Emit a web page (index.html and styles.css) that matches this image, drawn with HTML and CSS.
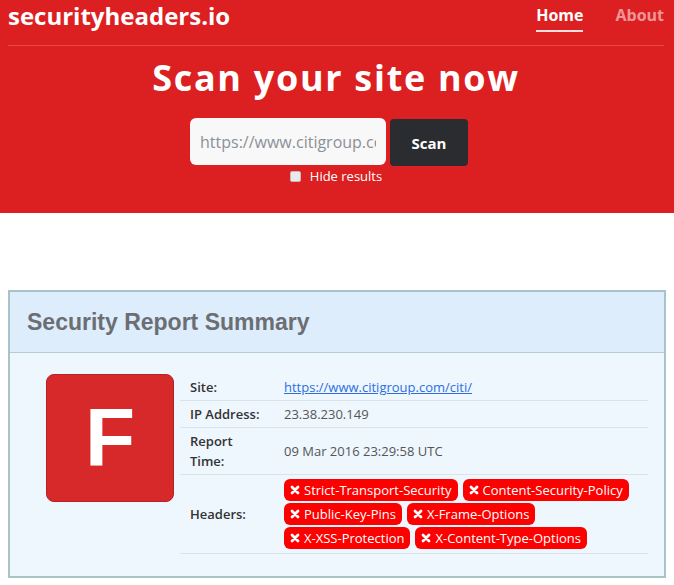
FILE: index.html
```html
<!DOCTYPE html>
<html>
<head>
<meta charset="utf-8">
<link rel="stylesheet" href="styles.css">
</head>
<body>
<header class="top">
  <div class="navbar">
    <div class="logo">securityheaders.io</div>
    <nav class="nav">
      <a class="nav-link active">Home</a>
      <a class="nav-link">About</a>
    </nav>
  </div>
  <div class="rule"></div>
  <h1 class="hero">Scan your site now</h1>
  <form class="scan">
    <input class="url" type="text" placeholder="https://www.citigroup.com/citi/">
    <button class="btn" type="button">Scan</button>
  </form>
  <label class="hide"><span class="box"></span>Hide results</label>
</header>

<main class="page">
  <section class="panel">
    <div class="panel-head">Security Report Summary</div>
    <div class="panel-body">
      <div class="grade">F</div>
      <table class="info">
        <tr class="r1"><th>Site:</th><td><a class="link">https://www.citigroup.com/citi/</a></td></tr>
        <tr><th>IP Address:</th><td>23.38.230.149</td></tr>
        <tr><th>Report<br>Time:</th><td>09 Mar 2016 23:29:58 UTC</td></tr>
        <tr class="last"><th>Headers:</th><td>
          <div class="badges">
            <span class="badge"><svg viewBox="0 0 10 10"><path d="M2 2L8 8M8 2L2 8"/></svg>Strict-Transport-Security</span>
            <span class="badge"><svg viewBox="0 0 10 10"><path d="M2 2L8 8M8 2L2 8"/></svg>Content-Security-Policy</span>
            <span class="badge"><svg viewBox="0 0 10 10"><path d="M2 2L8 8M8 2L2 8"/></svg>Public-Key-Pins</span>
            <span class="badge"><svg viewBox="0 0 10 10"><path d="M2 2L8 8M8 2L2 8"/></svg>X-Frame-Options</span>
            <span class="badge"><svg viewBox="0 0 10 10"><path d="M2 2L8 8M8 2L2 8"/></svg>X-XSS-Protection</span>
            <span class="badge"><svg viewBox="0 0 10 10"><path d="M2 2L8 8M8 2L2 8"/></svg>X-Content-Type-Options</span>
          </div>
        </td></tr>
      </table>
    </div>
  </section>
</main>
</body>
</html>
```
FILE: styles.css
```css
* { box-sizing: border-box; }
body {
  margin: 0;
  font-family: "Open Sans", sans-serif;
  background: #fff;
  color: #333;
}
.top {
  background: #dc1f21;
  height: 213px;
  padding: 0 10px 0 8px;
  color: #fff;
}
.navbar {
  display: flex;
  justify-content: space-between;
  height: 45px;
}
.logo {
  font-size: 24px;
  font-weight: 700;
  line-height: 32px;
  letter-spacing: 0;
}
.nav {
  display: flex;
  gap: 32px;
  padding-top: 4px;
}
.nav-link {
  font-size: 16px;
  font-weight: 700;
  line-height: 22px;
  color: rgba(255,255,255,0.55);
  height: 28px;
}
.nav-link.active {
  color: #fff;
  border-bottom: 2px solid rgba(255,255,255,0.85);
}
.rule {
  border-top: 1px solid rgba(255,255,255,0.18);
}
.hero {
  margin: 8px 0 0;
  text-align: center;
  font-size: 36px;
  font-weight: 700;
  line-height: 48px;
  letter-spacing: 1.7px;
}
.scan {
  display: flex;
  justify-content: center;
  gap: 4px;
  margin-top: 16px;
  padding-right: 14px;
}
.url {
  width: 196px;
  height: 47px;
  border: none;
  border-radius: 6px;
  background: #f8f8f8;
  padding: 0 10px;
  font-family: "Open Sans", sans-serif;
  font-size: 16px;
  color: #333;
}
.url::placeholder { color: #8b9097; }
.btn {
  width: 78px;
  height: 47px;
  margin-top: 1px;
  border: none;
  border-radius: 4px;
  background: #2a2c30;
  color: #fff;
  font-family: "Open Sans", sans-serif;
  font-weight: 700;
  font-size: 15px;
}
.hide {
  display: flex;
  justify-content: center;
  align-items: center;
  gap: 9px;
  font-size: 13px;
  line-height: 20px;
  margin-top: 0;
  padding-right: 0;
}
.box {
  width: 11px;
  height: 11px;
  background: #e9e9e9;
  border: 1px solid #bcbcbc;
  border-radius: 2px;
}
.page {
  padding: 77px 8px 0 8px;
}
.panel {
  width: 658px;
  border: 2px solid #a9c4c9;
  background: #eef6fe;
}
.panel-head {
  background: #ddedfc;
  height: 61px;
  border-bottom: 1px solid #b7cdd6;
  padding: 16px 17px 0;
  font-family: "Liberation Sans", Arial, sans-serif;
  font-weight: 700;
  font-size: 23px;
  line-height: 28px;
  color: #6b6e73;
}
.panel-body {
  display: flex;
  align-items: flex-start;
  gap: 6px;
  padding: 21px 16px 22px 36px;
}
.grade {
  flex: none;
  width: 128px;
  height: 128px;
  background: #d8292a;
  border: 1px solid #b32224;
  border-radius: 8px;
  color: #fff;
  font-family: "Liberation Sans", Arial, sans-serif;
  font-weight: 700;
  font-size: 82px;
  line-height: 126px;
  text-align: center;
}
.info {
  flex: 1;
  border-collapse: collapse;
  font-size: 13px;
  line-height: 20px;
}
.info th {
  width: 104px;
  text-align: left;
  font-weight: 600;
  color: #333;
  padding: 3px 10px;
  vertical-align: middle;
}
.info td {
  color: #555;
  padding: 3px 0;
  vertical-align: middle;
}
.info tr { border-top: 1px solid #dbe2e8; }
.info tr.r1 { border-top: none; }
.info tr.last { border-bottom: 1px solid #dbe2e8; }
.info tr.last td { padding: 4px 0 2px; }
.link {
  color: #2d6fe0;
  text-decoration: underline;
}
.badges {
  display: flex;
  flex-wrap: wrap;
}
.badge {
  display: inline-flex;
  align-items: center;
  height: 22px;
  padding: 0 6px 0 6px;
  margin: 0 5px 2px 0;
  background: #fd0000;
  color: #fff;
  border-radius: 6px;
  font-size: 13px;
  line-height: 22px;
}
.badge svg {
  width: 10px;
  height: 10px;
  margin-right: 4px;
  fill: none;
  stroke: #fff;
  stroke-width: 2.8;
  stroke-linecap: round;
}
```
